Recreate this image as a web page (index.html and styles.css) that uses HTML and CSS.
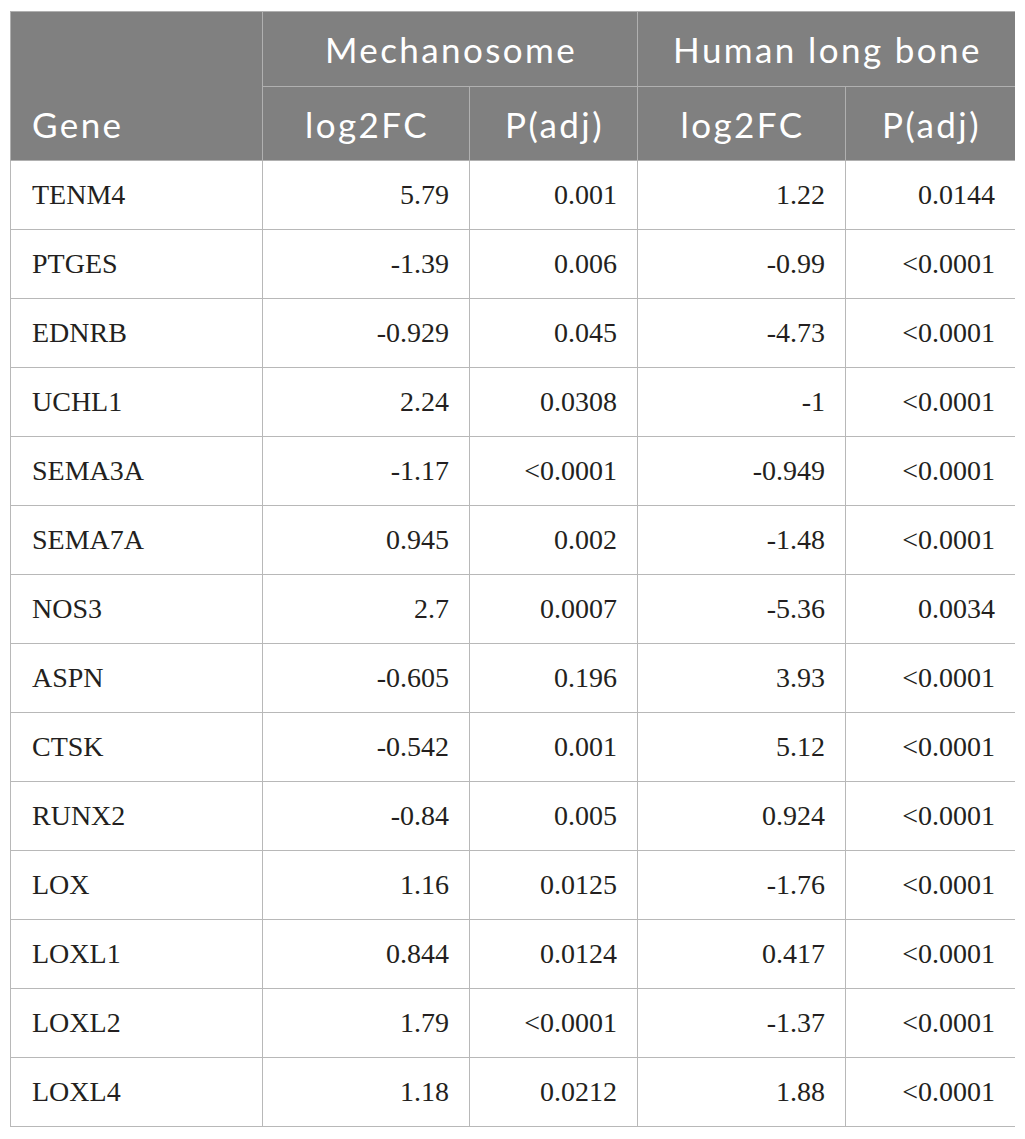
FILE: index.html
```html
<!DOCTYPE html>
<html>
<head>
<meta charset="utf-8">
<link rel="stylesheet" href="styles.css">
</head>
<body>
<table class="data">
  <colgroup>
    <col class="c-gene"><col class="c-a"><col class="c-b"><col class="c-c"><col class="c-d">
  </colgroup>
  <thead>
    <tr class="h1">
      <th rowspan="2" class="gene-h">Gene</th>
      <th colspan="2">Mechanosome</th>
      <th colspan="2">Human long bone</th>
    </tr>
    <tr class="h2">
      <th>log2FC</th><th>P(adj)</th><th>log2FC</th><th>P(adj)</th>
    </tr>
  </thead>
  <tbody>
    <tr><td>TENM4</td><td>5.79</td><td>0.001</td><td>1.22</td><td>0.0144</td></tr>
    <tr><td>PTGES</td><td>-1.39</td><td>0.006</td><td>-0.99</td><td>&lt;0.0001</td></tr>
    <tr><td>EDNRB</td><td>-0.929</td><td>0.045</td><td>-4.73</td><td>&lt;0.0001</td></tr>
    <tr><td>UCHL1</td><td>2.24</td><td>0.0308</td><td>-1</td><td>&lt;0.0001</td></tr>
    <tr><td>SEMA3A</td><td>-1.17</td><td>&lt;0.0001</td><td>-0.949</td><td>&lt;0.0001</td></tr>
    <tr><td>SEMA7A</td><td>0.945</td><td>0.002</td><td>-1.48</td><td>&lt;0.0001</td></tr>
    <tr><td>NOS3</td><td>2.7</td><td>0.0007</td><td>-5.36</td><td>0.0034</td></tr>
    <tr><td>ASPN</td><td>-0.605</td><td>0.196</td><td>3.93</td><td>&lt;0.0001</td></tr>
    <tr><td>CTSK</td><td>-0.542</td><td>0.001</td><td>5.12</td><td>&lt;0.0001</td></tr>
    <tr><td>RUNX2</td><td>-0.84</td><td>0.005</td><td>0.924</td><td>&lt;0.0001</td></tr>
    <tr><td>LOX</td><td>1.16</td><td>0.0125</td><td>-1.76</td><td>&lt;0.0001</td></tr>
    <tr><td>LOXL1</td><td>0.844</td><td>0.0124</td><td>0.417</td><td>&lt;0.0001</td></tr>
    <tr><td>LOXL2</td><td>1.79</td><td>&lt;0.0001</td><td>-1.37</td><td>&lt;0.0001</td></tr>
    <tr><td>LOXL4</td><td>1.18</td><td>0.0212</td><td>1.88</td><td>&lt;0.0001</td></tr>
  </tbody>
</table>
</body>
</html>
```

FILE: styles.css
```css
html, body {
  background: #ffffff;
}
body {
  margin: 11px 10px;
}
.data {
  border-collapse: collapse;
  table-layout: fixed;
  width: 1005px;
}
.c-gene { width: 252px; }
.c-a { width: 207px; }
.c-b { width: 168px; }
.c-c { width: 208px; }
.c-d { width: 170px; }

.data th {
  background: #808080;
  color: #ffffff;
  font-family: Lato, "Open Sans", sans-serif;
  font-weight: 400;
  font-size: 35px;
  letter-spacing: 2.4px;
  text-align: center;
  border: 1px solid #b0b0b0;
  padding: 0 10px 0 12px;
  vertical-align: middle;
  white-space: nowrap;
}
.data tr.h1 th { height: 74px; }
.data tr.h2 th { height: 73px; }
.data th.gene-h {
  text-align: left;
  vertical-align: bottom;
  padding-left: 21px;
  padding-bottom: 15px;
}
.data td {
  font-family: "Liberation Serif", "Times New Roman", serif;
  font-size: 28px;
  color: #231f20;
  border: 1px solid #b8b8b8;
  height: 68px;
  padding: 0 20px 0 21px;
  text-align: right;
  vertical-align: middle;
}
.data td:first-child {
  text-align: left;
}
```
